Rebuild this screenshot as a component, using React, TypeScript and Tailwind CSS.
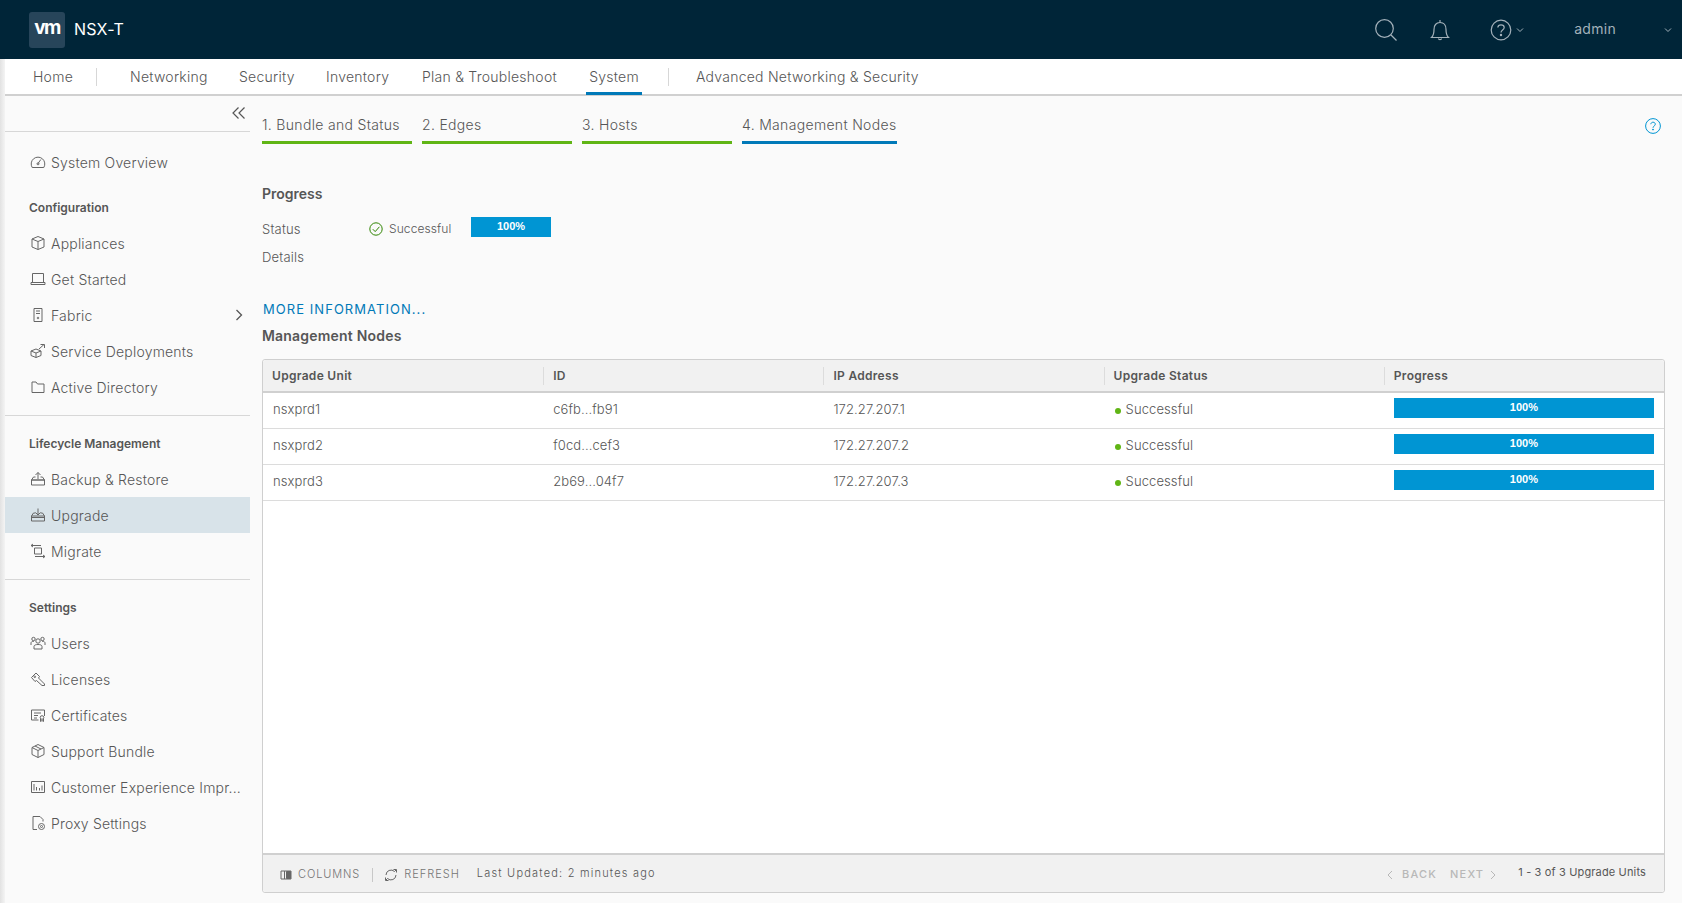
import React from 'react';

const Icon = ({ children, className = 'w-4 h-4 text-[#666666]' }: { children: React.ReactNode; className?: string }) => (
  <svg viewBox="0 0 16 16" fill="none" stroke="currentColor" strokeWidth="1" className={`${className} shrink-0`}>
    {children}
  </svg>
);

const sideIcons: Record<string, React.ReactNode> = {
  gauge: (
    <>
      <path d="M2.2 13.5A6.8 6.8 0 1 1 13.8 13.5Z" />
      <path d="M8 9.5 10.8 5.5" />
      <circle cx="8" cy="9.8" r="1" />
    </>
  ),
  cube: (
    <>
      <path d="M8 1.5 14 4v8l-6 2.5L2 12V4Z" />
      <path d="M2 4l6 2.5L14 4M8 6.5v8" />
    </>
  ),
  laptop: (
    <>
      <path d="M2.5 2.5h11v9h-11Z" />
      <path d="M1 11.5h14v2H1Z" />
    </>
  ),
  server: (
    <>
      <path d="M4 1.5h8v13H4Z" />
      <path d="M6 4h4M6 6.5h4" />
      <circle cx="8" cy="11" r="0.8" />
    </>
  ),
  deploy: (
    <>
      <path d="M6 6 11 8v4.5l-5 2-5-2V8Z" />
      <path d="M1 8l5 2 5-2M6 10v4.5" />
      <path d="M9 6l5-4.5M10.5 1.5H14.5V5" />
    </>
  ),
  folder: <path d="M2 3h4l1.5 2h6.5v8.5H2Z" />,
  backup: (
    <>
      <path d="M1.5 9 3.5 6h2M14.5 9l-2-3h-2M1.5 9v5h13V9ZM1.5 9h13" />
      <path d="M8 8V1.5M5.5 4 8 1.5 10.5 4" />
    </>
  ),
  upgrade: (
    <>
      <path d="M1.5 9 3.5 6h2M14.5 9l-2-3h-2M1.5 9v5h13V9ZM1.5 10.5h13" />
      <path d="M8 1.5V8M5.5 5.5 8 8l2.5-2.5" />
    </>
  ),
  migrate: (
    <>
      <path d="M4.5 5h7v6h-7Z" />
      <path d="M1 2.5h10M3 1 1 2.5 3 4M5 13.5h10M13 12l2 1.5-2 1.5" />
    </>
  ),
  users: (
    <>
      <circle cx="8" cy="6" r="2.2" />
      <path d="M4 14v-2.5C4 10 6 9.5 8 9.5s4 .5 4 2V14Z" />
      <circle cx="3.5" cy="4" r="1.7" />
      <circle cx="12.5" cy="4" r="1.7" />
      <path d="M1 10V8c0-1 1-1.8 3-1.8M15 10V8c0-1-1-1.8-3-1.8" />
    </>
  ),
  key: (
    <>
      <path d="M1.5 6.5 6 2l3.5 3.5-1 1.5 6 6v1.5H12L6.5 9.5 5 10.5Z" />
      <circle cx="4.8" cy="5.8" r="0.8" />
    </>
  ),
  cert: (
    <>
      <path d="M8.5 13H1.5V3h13v6" />
      <path d="M4 6h7M4 8.5h4M4 11h3" />
      <circle cx="12" cy="10.5" r="1.8" />
      <path d="M10.5 12v2.5l1.5-1 1.5 1V12" />
    </>
  ),
  bundle: (
    <>
      <path d="M8 1.5 14 4.5v7l-6 3-6-3v-7Z" />
      <path d="M2 4.5l6 3 6-3M8 7.5v7M5 3l6 3" />
    </>
  ),
  chart: (
    <>
      <path d="M1.5 2.5h13v11h-13Z" />
      <path d="M4 11.5V5M6.5 11.5V8M9.5 11.5V9M12 11.5V6.5" />
    </>
  ),
  proxy: (
    <>
      <path d="M7 14.5H3v-13h7l3 3v2" />
      <circle cx="11.5" cy="11.5" r="3" />
      <circle cx="11.5" cy="11.5" r="1" />
    </>
  ),
};

const SideItem = ({ label, icon, active, chevron }: { label: string; icon: string; active?: boolean; chevron?: boolean }) => (
  <div className={`h-9 flex items-center pl-[25px] ${active ? 'bg-[#d8e3e9]' : ''}`}>
    <Icon>{sideIcons[icon]}</Icon>
    <span className={`ml-[5px] whitespace-nowrap ${chevron ? 'w-[184px]' : ''}`}>{label}</span>
    {chevron && (
      <svg viewBox="0 0 8 12" fill="none" stroke="#565656" strokeWidth="1.3" className="w-2 h-3 shrink-0">
        <path d="M1.5 1 6.5 6 1.5 11" />
      </svg>
    )}
  </div>
);

const rows = [
  { unit: 'nsxprd1', id: 'c6fb...fb91', ip: '172.27.207.1' },
  { unit: 'nsxprd2', id: 'f0cd...cef3', ip: '172.27.207.2' },
  { unit: 'nsxprd3', id: '2b69...04f7', ip: '172.27.207.3' },
];

const tabs = [
  { label: '1. Bundle and Status', cls: 'w-[150px] border-[#60b515]' },
  { label: '2. Edges', cls: 'w-[150px] border-[#60b515]' },
  { label: '3. Hosts', cls: 'w-[150px] border-[#60b515]' },
  { label: '4. Management Nodes', cls: 'w-[155px] border-[#0079b8]' },
];

const Bar = () => (
  <div className="h-5 bg-[#0095d3] flex items-center justify-center pb-[1px] text-white text-[11px] font-bold tracking-normal font-['Liberation_Sans',sans-serif]">
    100%
  </div>
);

const App = () => {
  return (
    <div className="w-[1682px] h-[903px] overflow-hidden flex flex-col bg-[#fafafa] text-[#565656] text-[14px] tracking-[0.2px] font-[350] font-['Inter',sans-serif]">
      {/* Header */}
      <header className="h-[59px] shrink-0 bg-[#002538] flex items-center text-white">
        <div className="ml-[29px] w-9 h-9 rounded-[3px] bg-[#27455a] flex items-center justify-center text-[19px] font-bold tracking-[-1.5px] pb-[3px]">
          vm
        </div>
        <span className="ml-[9px] text-[16px] tracking-[0.2px] font-normal pb-[2px]">NSX-T</span>
        <div className="ml-auto flex items-center text-[#a3b1ba]">
          <svg viewBox="0 0 22 22" fill="none" stroke="currentColor" strokeWidth="1.2" className="w-[22px] h-[22px]">
            <circle cx="9.5" cy="9.5" r="8.8" />
            <path d="M16 16 21.5 21.5" />
          </svg>
          <svg viewBox="0 0 20 22" fill="none" stroke="currentColor" strokeWidth="1.2" className="ml-[33px] w-5 h-[22px]">
            <path d="M1.5 18.5c2-2 2.5-3.5 2.5-8C4 6 6.5 3.5 10 3.5s6 2.5 6 7c0 4.5.5 6 2.5 8Z" />
            <path d="M10 1v2.5M8.500 19.5c0 1.5 3 1.5 3 0" />
          </svg>
          <svg viewBox="0 0 22 22" fill="none" stroke="currentColor" strokeWidth="1.2" className="ml-[40px] w-[22px] h-[22px]">
            <circle cx="11" cy="11" r="9.8" />
            <path d="M7.8 8.5C8 6.5 9.5 5.8 11 5.8c1.8 0 3.2 1 3.2 2.7 0 2.5-3.2 2.5-3.2 5" />
            <circle cx="11" cy="16" r="0.6" fill="currentColor" />
          </svg>
          <svg viewBox="0 0 8 6" fill="none" stroke="currentColor" strokeWidth="1" className="ml-[4px] w-2 h-[6px]">
            <path d="M1 1.5 4 4.5 7 1.5" />
          </svg>
          <span className="ml-[50px] text-[14px] tracking-[0.3px] font-normal pb-[2px]">admin</span>
          <svg viewBox="0 0 8 6" fill="none" stroke="currentColor" strokeWidth="1" className="ml-[48px] mr-[10px] w-2 h-[6px]">
            <path d="M1 1.5 4 4.5 7 1.5" />
          </svg>
        </div>
      </header>

      <div className="flex-1 flex min-h-0">
        <div className="w-[5px] shrink-0 bg-gradient-to-r from-[#e2e2e2] to-[#f4f4f4]" />
        <div className="flex-1 flex flex-col min-w-0">
          {/* Top nav */}
          <nav className="h-[37px] shrink-0 bg-white border-b-2 border-[#d0d0d0] flex items-center tracking-[0.25px]">
            <span className="ml-[28px] w-[63px]">Home</span>
            <div className="w-px h-[18px] bg-[#d7d7d7]" />
            <span className="ml-[33px] w-[109px]">Networking</span>
            <span className="w-[87px]">Security</span>
            <span className="w-[96px]">Inventory</span>
            <span className="w-[164px]">Plan &amp; Troubleshoot</span>
            <div className="w-[56px] h-full flex items-center justify-center border-b-[3px] border-[#0079b8] pt-[1px] -mb-[1px]">
              System
            </div>
            <div className="ml-[26px] w-px h-[18px] bg-[#d7d7d7]" />
            <span className="ml-[27px]">Advanced Networking &amp; Security</span>
          </nav>

          <div className="flex-1 flex min-h-0">
            {/* Sidebar */}
            <aside className="w-[245px] shrink-0">
              <div className="h-9 border-b border-[#d7d7d7] flex justify-end items-center pr-[4px] pb-[2px]">
                <svg viewBox="0 0 14 14" fill="none" stroke="#565656" strokeWidth="1.2" className="w-[14px] h-[14px]">
                  <path d="M6.5 1.5 1 7l5.500 5.500M12.500 1.500 7 7l5.500 5.500" />
                </svg>
              </div>
              <div className="pt-[12px]">
                <SideItem label="System Overview" icon="gauge" />
              </div>
              <div className="h-[45px] pl-[24px] pt-[20px] text-[12px] font-semibold tracking-normal leading-[16px]">Configuration</div>
              <SideItem label="Appliances" icon="cube" />
              <SideItem label="Get Started" icon="laptop" />
              <SideItem label="Fabric" icon="server" chevron />
              <SideItem label="Service Deployments" icon="deploy" />
              <SideItem label="Active Directory" icon="folder" />
              <div className="mt-[10px] border-b border-[#d7d7d7]" />
              <div className="h-[45px] pl-[24px] pt-[20px] text-[12px] font-semibold tracking-normal leading-[16px]">Lifecycle Management</div>
              <SideItem label="Backup & Restore" icon="backup" />
              <SideItem label="Upgrade" icon="upgrade" active />
              <SideItem label="Migrate" icon="migrate" />
              <div className="mt-[10px] border-b border-[#d7d7d7]" />
              <div className="h-[45px] pl-[24px] pt-[20px] text-[12px] font-semibold tracking-normal leading-[16px]">Settings</div>
              <SideItem label="Users" icon="users" />
              <SideItem label="Licenses" icon="key" />
              <SideItem label="Certificates" icon="cert" />
              <SideItem label="Support Bundle" icon="bundle" />
              <SideItem label="Customer Experience Impr..." icon="chart" />
              <SideItem label="Proxy Settings" icon="proxy" />
            </aside>

            {/* Main */}
            <main className="flex-1 min-w-0 pl-[12px] pr-[17px] flex flex-col">
              <div className="flex items-start">
                <div className="flex gap-[10px]">
                  {tabs.map((tab) => (
                    <div key={tab.label} className={`h-[48px] pt-[19px] leading-[20px] tracking-[0.32px] border-b-[3px] ${tab.cls}`}>
                      {tab.label}
                    </div>
                  ))}
                </div>
                <svg viewBox="0 0 16 16" fill="none" stroke="#0095d3" strokeWidth="1" className="ml-auto mt-[22px] mr-[4px] w-4 h-4">
                  <circle cx="8" cy="8" r="7.4" />
                  <path d="M5.8 6.2C6 4.8 7 4.2 8 4.2c1.3 0 2.3.8 2.3 2 0 1.8-2.3 1.8-2.3 3.6" />
                  <circle cx="8" cy="11.6" r="0.5" fill="#0095d3" />
                </svg>
              </div>

              <h2 className="mt-[40px] font-semibold tracking-normal leading-[20px]">Progress</h2>
              <div className="mt-[13px] h-5 flex items-center text-[13px]">
                <span className="w-[107px] pt-[5px]">Status</span>
                <svg viewBox="0 0 14 14" fill="none" stroke="#2f8400" strokeWidth="1" className="w-[14px] h-[14px] mt-[4px]">
                  <circle cx="7" cy="7" r="6.2" />
                  <path d="M3.8 7.2 6.2 9.6 10.4 4.8" />
                </svg>
                <span className="ml-[6px] w-[82px] text-[12px] tracking-[0.1px] pt-[4px]">Successful</span>
                <div className="w-20">
                  <Bar />
                </div>
              </div>
              <div className="mt-[11px] leading-[18px] text-[13px]">Details</div>

              <a className="mt-[34px] ml-px leading-[18px] text-[13px] font-normal tracking-[1.05px] text-[#0079b8]">MORE INFORMATION...</a>
              <h2 className="mt-[9px] font-semibold tracking-[0.2px] leading-[18px]">Management Nodes</h2>

              {/* Table */}
              <div className="mt-[14px] mb-[10px] flex-1 flex flex-col bg-white border border-[#cfcfcf] rounded-[3px]">
                <div className="h-[33px] shrink-0 bg-[#f1f1f1] border-b-2 border-[#d0d0d0] grid grid-cols-5 items-center text-[12px] font-semibold tracking-[0.3px] rounded-t-[3px]">
                  {['Upgrade Unit', 'ID', 'IP Address', 'Upgrade Status', 'Progress'].map((h, i) => (
                    <div key={h} className={`h-[18px] flex items-center pl-[9px] ${i > 0 ? 'border-l border-[#dcdcdc]' : ''}`}>
                      {h}
                    </div>
                  ))}
                </div>
                <div className="flex-1">
                  {rows.map((r) => (
                    <div key={r.unit} className="h-9 border-b border-[#dcdcdc] grid grid-cols-5 items-center text-[13px] tracking-[0.1px]">
                      <div className="pl-[10px] pb-[1px]">{r.unit}</div>
                      <div className="pl-[10px] pb-[1px]">{r.id}</div>
                      <div className="pl-[10px] pb-[1px]">{r.ip}</div>
                      <div className="pl-[11px] flex items-center pb-[1px]">
                        <span className="w-[6px] h-[6px] rounded-full bg-[#60b515] mt-[1px]" />
                        <span className="ml-[5px]">Successful</span>
                      </div>
                      <div className="pl-[10px] pr-[10px] pb-[5px]">
                        <Bar />
                      </div>
                    </div>
                  ))}
                </div>
                <div className="h-[39px] shrink-0 bg-[#f1f1f1] border-t-2 border-[#d0d0d0] flex items-center text-[11px] pt-[2px] rounded-b-[3px]">
                  <svg viewBox="0 0 12 12" fill="none" stroke="#666666" strokeWidth="1" className="ml-[17px] w-3 h-3">
                    <path d="M1 2h10v8H1ZM4.5 2v8" />
                    <path d="M6.5 2.5h4v7h-4Z" fill="#666666" />
                  </svg>
                  <span className="ml-[6px] tracking-[0.9px] text-[#747474]">COLUMNS</span>
                  <div className="ml-[12px] w-px h-[14px] bg-[#c8c8c8]" />
                  <svg viewBox="0 0 14 14" fill="none" stroke="#666666" strokeWidth="1" className="ml-[11px] w-[14px] h-[14px]">
                    <path d="M2 7a5 5 0 0 1 8.5-3.5L12 2M12 7a5 5 0 0 1-8.5 3.5L2 12" />
                    <path d="M9.5 1.5h3v3M4.5 12.5h-3v-3" />
                  </svg>
                  <span className="ml-[6px] tracking-[1px] text-[#747474]">REFRESH</span>
                  <span className="ml-[17px] tracking-[1.2px] -mt-[2px]">Last Updated: 2 minutes ago</span>
                  <div className="ml-auto flex items-center text-[#b8b8b8] font-medium">
                    <svg viewBox="0 0 8 10" fill="none" stroke="currentColor" strokeWidth="1" className="w-2 h-[10px]">
                      <path d="M6 1 2 5l4 4" />
                    </svg>
                    <span className="ml-[8px] tracking-[1.2px]">BACK</span>
                    <span className="ml-[13px] tracking-[1.2px]">NEXT</span>
                    <svg viewBox="0 0 8 10" fill="none" stroke="currentColor" strokeWidth="1" className="ml-[5px] w-2 h-[10px]">
                      <path d="M2 1l4 4-4 4" />
                    </svg>
                    <span className="ml-[21px] mr-[18px] text-[#565656] font-normal tracking-[0.15px] -mt-[5px]">1 - 3 of 3 Upgrade Units</span>
                  </div>
                </div>
              </div>
            </main>
          </div>
        </div>
      </div>
    </div>
  );
};

export default App;
